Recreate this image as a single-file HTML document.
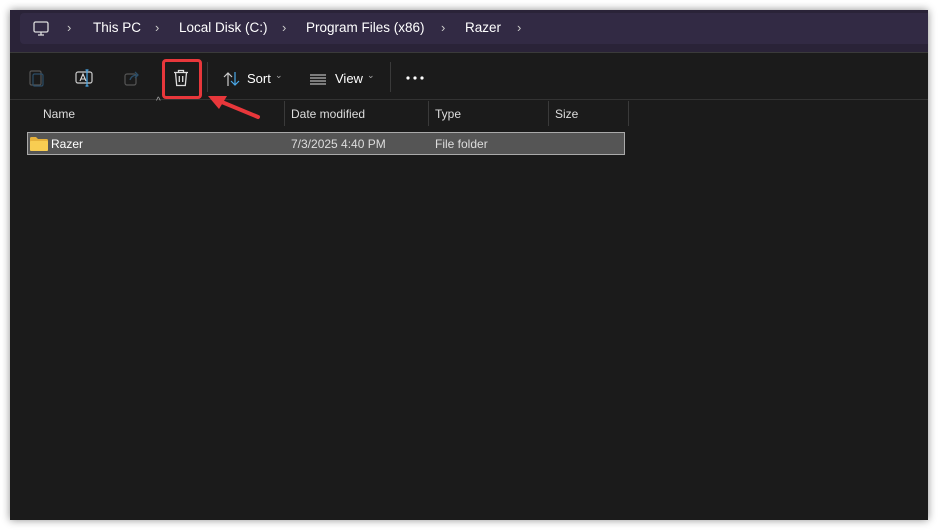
<!DOCTYPE html>
<html><head><meta charset="utf-8"><style>
*{margin:0;padding:0;box-sizing:border-box}
body{width:938px;height:530px;background:#fff;position:relative;overflow:hidden;font-family:"Segoe UI","Liberation Sans",sans-serif;color:#fff;font-size:13px}
.win{position:absolute;left:10px;top:10px;width:918px;height:510px;background:#1b1b1b;box-shadow:0 0 8px rgba(0,0,0,.45)}
.top{position:absolute;left:0;top:0;width:918px;height:43px;background:#2a2338;border-bottom:1px solid #3a3a3a}
.crumb{position:absolute;left:10px;top:3px;width:908px;height:31px;background:#322a44;border-radius:4px 0 0 4px}
.t{position:absolute;white-space:nowrap}
.tb{position:absolute;left:0;top:44px;width:918px;height:46px;border-bottom:1px solid #333}
.sep{position:absolute;width:1px;background:#3a3a3a}
.hd{color:#ddd;font-size:12px}
.c{font-size:14px;top:7px}
</style></head><body>
<div class="win">
 <div class="top"><div class="crumb">
  <svg class="t" style="left:13px;top:8px" width="16" height="15" viewBox="0 0 16 15"><rect x="1" y="1" width="14" height="10" rx="1.5" fill="none" stroke="#ddd" stroke-width="1.3"/><path d="M5 14h6M8 11v3" stroke="#ddd" stroke-width="1.3"/></svg>
  <span class="t" style="left:47px;top:7px;color:#ccc">›</span>
  <span class="t c" style="left:73px;font-size:13.5px">This PC</span>
  <span class="t" style="left:135px;top:7px;color:#ccc">›</span>
  <span class="t c" style="left:159px;font-size:13.5px">Local Disk (C:)</span>
  <span class="t" style="left:262px;top:7px;color:#ccc">›</span>
  <span class="t c" style="left:286px;font-size:13.5px">Program Files (x86)</span>
  <span class="t" style="left:421px;top:7px;color:#ccc">›</span>
  <span class="t c" style="left:445px;font-size:13.5px">Razer</span>
  <span class="t" style="left:497px;top:7px;color:#ccc">›</span>
 </div></div>
 <div class="tb">
  <svg class="t" style="left:19px;top:15px" width="16" height="18" viewBox="0 0 16 18"><rect x="1" y="2" width="11" height="14" rx="1.5" fill="none" stroke="#555" stroke-width="1.2"/><rect x="4" y="5" width="10" height="12" rx="1.5" fill="none" stroke="#2c4e68" stroke-width="1.2"/></svg>
  <svg class="t" style="left:65px;top:15px" width="18" height="18" viewBox="0 0 18 18"><rect x="1" y="3" width="16" height="11" rx="2" fill="none" stroke="#ccc" stroke-width="1.2"/><path d="M5 12l3-7 3 7M6 10h4" stroke="#ddd" stroke-width="1.1" fill="none"/><path d="M12 1v16M10.5 1h3M10.5 17h3" stroke="#4aa8e8" stroke-width="1.2"/></svg>
  <svg class="t" style="left:114px;top:16px" width="17" height="16" viewBox="0 0 17 16"><rect x="1" y="4" width="11" height="11" rx="2" fill="none" stroke="#555" stroke-width="1.2"/><path d="M6 10c1-4 4-5 8-5M11 2l3 3-3 3" stroke="#2c4e68" stroke-width="1.3" fill="none"/></svg>
  <svg class="t" style="left:163px;top:15px" width="16" height="18" viewBox="0 0 16 18"><path d="M1 3.5h14M5.5 3.5V1.5h5v2M2.5 3.5l1.2 13h8.6l1.2-13M6.3 7v6M9.7 7v6" stroke="#ddd" stroke-width="1.3" fill="none"/></svg>
  <div class="sep" style="left:197px;top:8px;height:30px"></div>
  <svg class="t" style="left:213px;top:17px" width="18" height="16" viewBox="0 0 18 16"><path d="M5 15V2M1 6l4-4 4 4" stroke="#ccc" stroke-width="1.2" fill="none"/><path d="M12 1v13M8 10l4 4 4-4" stroke="#4aa8e8" stroke-width="1.2" fill="none"/></svg>
  <span class="t" style="left:237px;top:17px">Sort</span><span class="t" style="left:265px;top:16px;font-size:9px;color:#aaa">⌄</span>
  <svg class="t" style="left:300px;top:20px" width="16" height="11" viewBox="0 0 16 11"><path d="M0 1h16M0 4h16M0 7h16M0 10h16" stroke="#ddd" stroke-width="1"/></svg>
  <span class="t" style="left:325px;top:17px">View</span><span class="t" style="left:357px;top:16px;font-size:9px;color:#aaa">⌄</span>
  <div class="sep" style="left:380px;top:8px;height:30px"></div>
  <svg class="t" style="left:396px;top:22px" width="18" height="4" viewBox="0 0 18 4"><circle cx="2" cy="2" r="1.6" fill="#fff"/><circle cx="9" cy="2" r="1.6" fill="#fff"/><circle cx="16" cy="2" r="1.6" fill="#fff"/></svg>
 </div>
 <span class="t" style="left:146px;top:86px;font-size:10px;color:#aaa">^</span>
 <span class="t hd" style="left:33px;top:97px">Name</span>
 <div class="sep" style="left:274px;top:91px;height:25px"></div>
 <span class="t hd" style="left:281px;top:97px">Date modified</span>
 <div class="sep" style="left:418px;top:91px;height:25px"></div>
 <span class="t hd" style="left:425px;top:97px">Type</span>
 <div class="sep" style="left:538px;top:91px;height:25px"></div>
 <span class="t hd" style="left:545px;top:97px">Size</span>
 <div class="sep" style="left:618px;top:91px;height:25px"></div>
 <div class="t" style="left:17px;top:122px;width:598px;height:23px;background:#555;border:1px solid #aaa"></div>
 <svg class="t" style="left:20px;top:127px" width="18" height="14" viewBox="0 0 18 14"><path d="M0 1.5Q0 0 1.5 0H6l2 2h8.5Q18 2 18 3.5V13H0z" fill="#e6b13b"/><rect x="0" y="4" width="18" height="10" rx="1" fill="#f8cd52"/></svg>
 <span class="t" style="left:41px;top:127px;font-size:12px">Razer</span>
 <span class="t" style="left:281px;top:127px;font-size:12px;color:#ddd">7/3/2025 4:40 PM</span>
 <span class="t" style="left:425px;top:127px;font-size:12px;color:#ddd">File folder</span>
</div>
<div class="t" style="left:162px;top:59px;width:40px;height:40px;border:3px solid #e8373b;border-radius:4px"></div>
<svg class="t" style="left:200px;top:88px" width="65" height="35" viewBox="0 0 65 35"><path d="M58 29L17 12" stroke="#e8373b" stroke-width="4" stroke-linecap="round"/><path d="M8 8l19 0-8 13z" fill="#e8373b"/></svg>
</body></html>
